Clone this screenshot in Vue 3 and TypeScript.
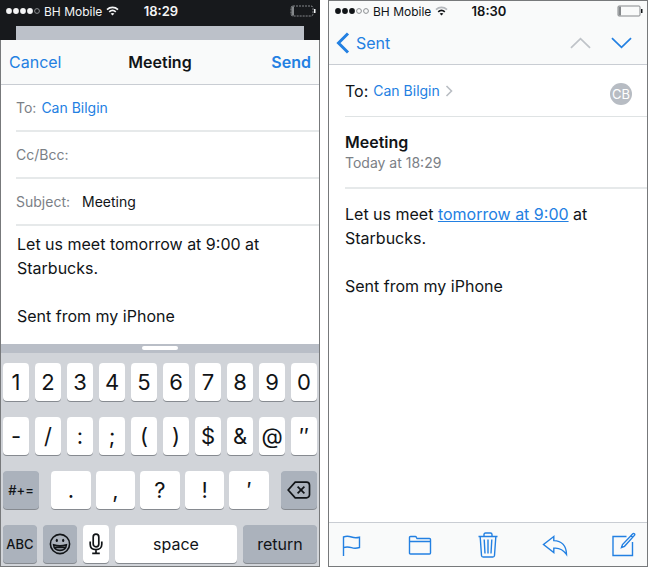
<script setup lang="ts">
import { ref } from 'vue'

const recipient = ref<string>('Can Bilgin')
const copies = ref<string>('')
const subject = ref<string>('Meeting')
const body = ref<string>('Let us meet tomorrow at 9:00 at Starbucks.\n\nSent from my iPhone')

const digits: string[] = ['1', '2', '3', '4', '5', '6', '7', '8', '9', '0']
const symbols: string[] = ['-', '/', ':', ';', '(', ')', '$', '&', '@', '″']
const punctuation: string[] = ['.', ',', '?', '!', '′']
</script>

<template>
  <main class="screens">
    <section class="phone compose">
      <header class="status dark">
        <span class="carrier">
          <svg class="dots" viewBox="0 0 34 8" aria-hidden="true">
            <circle cx="3" cy="4" r="2.9" /><circle cx="10" cy="4" r="2.9" /><circle cx="17" cy="4" r="2.9" />
            <circle cx="24" cy="4" r="2.9" /><circle class="empty" cx="31" cy="4" r="2.4" />
          </svg>
          BH Mobile
          <svg class="wifi" viewBox="0 0 13 10" aria-hidden="true">
            <path d="M1 3.6C4.2.6 8.8.6 12 3.6M3.2 5.9c1.9-1.7 4.7-1.7 6.6 0" />
            <path class="solid" d="M6.5 9.6 4.6 7.6c1.1-.9 2.7-.9 3.8 0z" />
          </svg>
        </span>
        <time class="clock">18:29</time>
        <svg class="battery" viewBox="0 0 26 12" aria-hidden="true">
          <rect x="1" y="1" width="22" height="10" rx="2" stroke-dasharray="2 1" />
          <path class="solid" d="M1.5 1.5H4v9H1.5z" /><path class="solid tip" d="M24 4h1.5v4H24z" />
        </svg>
      </header>
      <div class="behind"></div>

      <form class="sheet" @submit.prevent>
        <div class="titlebar">
          <button type="button" class="link">Cancel</button>
          <h1>Meeting</h1>
          <button type="submit" class="link strong">Send</button>
        </div>
        <div class="field">
          <label for="to">To:</label>
          <input id="to" v-model="recipient" class="address" type="text" />
        </div>
        <div class="field">
          <label for="cc">Cc/Bcc:</label>
          <input id="cc" v-model="copies" type="text" />
        </div>
        <div class="field wide">
          <label for="subject">Subject:</label>
          <input id="subject" v-model="subject" type="text" />
        </div>
        <textarea v-model="body" class="text" aria-label="Message" rows="4"></textarea>
      </form>

      <div class="handle"><span></span></div>
      <div class="keyboard">
        <div class="keys">
          <button v-for="key in digits" :key="key" type="button" class="key">{{ key }}</button>
        </div>
        <div class="keys">
          <button v-for="key in symbols" :key="key" type="button" class="key">{{ key }}</button>
        </div>
        <div class="keys spread">
          <button type="button" class="key gray small">#+=</button>
          <div class="middle">
            <button v-for="key in punctuation" :key="key" type="button" class="key">{{ key }}</button>
          </div>
          <button type="button" class="key gray small" aria-label="Delete">
            <svg class="delete" viewBox="0 0 24 18" aria-hidden="true">
              <path d="M8.2 1.2h11.3a3 3 0 0 1 3 3v9.6a3 3 0 0 1-3 3H8.2L1.2 9z" /><path d="m10.6 5.6 6.8 6.8m0-6.8-6.8 6.8" />
            </svg>
          </button>
        </div>
        <div class="keys last">
          <button type="button" class="key gray small">ABC</button>
          <button type="button" class="key gray" aria-label="Emoji">
            <svg class="emoji" viewBox="0 0 22 22" aria-hidden="true">
              <circle cx="11" cy="11" r="9.6" />
              <path d="M4.6 11.8c4.2 1.2 8.600 1.200 12.800 0-.3 3.500-2.800 5.600-6.400 5.600s-6.100-2.100-6.400-5.600zM6 14.400h10" />
              <ellipse class="solid" cx="7.800" cy="7.400" rx="1.100" ry="1.600" /><ellipse class="solid" cx="14.200" cy="7.400" rx="1.100" ry="1.600" />
            </svg>
          </button>
          <button type="button" class="key" aria-label="Dictate">
            <svg class="mic" viewBox="0 0 14 22" aria-hidden="true">
              <rect x="4.200" y="1.200" width="5.600" height="12.600" rx="2.800" />
              <path d="M1.200 8.600v2.600c0 3.400 2.400 5.400 5.800 5.400s5.800-2 5.800-5.400V8.600M7 16.600v3.600M3.200 20.400h7.600" />
            </svg>
          </button>
          <button type="button" class="key word">space</button>
          <button type="button" class="key gray word">return</button>
        </div>
      </div>
    </section>

    <section class="phone reader">
      <div class="bar">
        <header class="status">
          <span class="carrier">
            <svg class="dots" viewBox="0 0 34 8" aria-hidden="true">
              <circle cx="3" cy="4" r="2.9" /><circle cx="10" cy="4" r="2.9" /><circle cx="17" cy="4" r="2.9" />
              <circle class="empty" cx="24" cy="4" r="2.4" /><circle class="empty" cx="31" cy="4" r="2.4" />
            </svg>
            BH Mobile
            <svg class="wifi" viewBox="0 0 13 10" aria-hidden="true">
              <path class="faint" d="M1 3.6C4.2.6 8.8.6 12 3.6" /><path d="M3.2 5.9c1.9-1.7 4.7-1.7 6.6 0" />
              <path class="solid" d="M6.5 9.6 4.6 7.6c1.1-.9 2.7-.9 3.8 0z" />
            </svg>
          </span>
          <time class="clock">18:30</time>
          <svg class="battery" viewBox="0 0 26 12" aria-hidden="true">
            <rect x="1" y="1" width="22" height="10" rx="1" />
            <path class="solid" d="M1.5 1.5H4v9H1.5z" /><path class="solid tip" d="M24 4h1.5v4H24z" />
          </svg>
        </header>
        <nav class="nav">
          <a href="#" class="back">
            <svg viewBox="0 0 14 22" aria-hidden="true"><path d="M12 1.500 2.500 11l9.500 9.500" /></svg>
            Sent
          </a>
          <button type="button" class="step off" aria-label="Previous message" disabled>
            <svg viewBox="0 0 22 12" aria-hidden="true"><path d="m1 11 10-9.500L21 11" /></svg>
          </button>
          <button type="button" class="step" aria-label="Next message">
            <svg viewBox="0 0 22 12" aria-hidden="true"><path d="m1 1 10 9.500L21 1" /></svg>
          </button>
        </nav>
      </div>

      <article class="mail">
        <div class="to">
          <span>To:</span>
          <a href="#">Can Bilgin</a>
          <svg class="more" viewBox="0 0 8 12" aria-hidden="true"><path d="m1.500 1 5 5-5 5" /></svg>
          <span class="avatar">CB</span>
        </div>
        <div class="subject">
          <h2>Meeting</h2>
          <time>Today at 18:29</time>
        </div>
        <div class="text">
          <p>Let us meet <a href="#">tomorrow at 9:00</a> <span>at</span> <span>Starbucks.</span></p>
          <p>Sent from my iPhone</p>
        </div>
      </article>

      <footer class="tools">
        <button type="button" aria-label="Flag">
          <svg viewBox="0 0 24 26" aria-hidden="true">
            <path d="M3.500 24V5c3-1.200 5.500-.8 8 0s5 1 8 .2v10.300c-3 1-5.500 1-8 .2s-5-1.200-8 0" />
          </svg>
        </button>
        <button type="button" aria-label="Move to folder">
          <svg viewBox="0 0 24 26" aria-hidden="true">
            <path d="M1.500 21V5.500q0-1 1-1h4.800q.8 0 1.200 1l.5 1h12.500q1 0 1 1V21q0 1-1 1h-19q-1 0-1-1zM1.500 9.500h21" />
          </svg>
        </button>
        <button type="button" aria-label="Delete message">
          <svg viewBox="0 0 24 26" aria-hidden="true">
            <path d="M2.500 4.500h19M8 4V2.500q0-1.500 1.500-1.500h5Q16 1 16 2.500V4M4.200 5l1.300 18.500q.1 1.500 1.600 1.500h9.800q1.500 0 1.600-1.500L19.800 5M8.200 7.500 9 21.500M12 7.500v14M15.800 7.500l-.8 14" />
          </svg>
        </button>
        <button type="button" aria-label="Reply">
          <svg viewBox="2 0 24 26" aria-hidden="true">
            <path d="M11.800 4.500 1.500 12.500l10.300 8v-4.300c5-.6 9.200 1.200 12.700 6.200C24.300 13.800 19.500 8.800 11.800 8.600z" />
          </svg>
        </button>
        <button type="button" aria-label="New message">
          <svg viewBox="0 0 24 26" aria-hidden="true">
            <path d="M14.500 4.500H1v19h19.500V10M9.500 15.500l1-3L20.800 1.800q.8-.7 1.600 0t0 1.600L12.500 14.300zM19 3.500l2 2" />
          </svg>
        </button>
      </footer>
    </section>
  </main>
</template>

<style>
body {
  background: #fff;
}
</style>

<style scoped>
.screens {
  display: grid;
  grid-template-columns: 1fr 1fr;
  gap: 8px;
  min-height: 100vh;
  font-family: Inter, 'Liberation Sans', sans-serif;
  font-size: 16px;
  color: #111417;
}

.screens *,
.screens {
  box-sizing: border-box;
}

button,
input,
textarea {
  margin: 0;
  padding: 0;
  border: 0;
  background: none;
  font: inherit;
  color: inherit;
  outline: none;
}

h1,
h2,
p {
  margin: 0;
}

a,
.link {
  color: #2380e2;
  text-decoration: none;
}

svg {
  display: block;
  flex: none;
  fill: none;
  stroke: currentColor;
  overflow: visible;
}

.solid {
  fill: currentColor;
  stroke: none;
}

.phone {
  display: flex;
  flex-direction: column;
  min-width: 0;
}

.compose {
  background: #17191c;
}

.reader {
  border: 1px solid #77797b;
}

/* status bar */
.status {
  display: grid;
  grid-template-columns: 1fr auto 1fr;
  align-items: center;
  height: 20px;
  padding: 0 4px 0 6px;
  font-size: 12px;
}

.dark {
  height: 22px;
  color: #f4f5f6;
}

.carrier {
  display: flex;
  align-items: center;
  gap: 4px;
  white-space: nowrap;
}

.clock {
  font-size: 13px;
  font-weight: 600;
}

.dots {
  width: 34px;
  height: 8px;
  fill: currentColor;
  stroke: none;
}

.dots .empty {
  fill: none;
  stroke: #8b8e91;
}

.wifi {
  width: 13px;
  height: 10px;
  stroke-width: 1.7;
}

.faint {
  stroke: #b4b8bc;
}

.battery {
  justify-self: end;
  width: 26px;
  height: 12px;
  stroke: #85888b;
}

.battery .solid {
  fill: #85888b;
  stroke: none;
}

.battery .tip {
  fill: currentColor;
}

.behind {
  height: 14px;
  margin: 4px 16px 0;
  background: #bcc1c9;
}

/* compose sheet */
.sheet {
  flex: 1;
  display: flex;
  flex-direction: column;
  border: 1px solid #77797b;
  border-width: 0 1px;
  background: #fff;
}

.titlebar {
  display: grid;
  grid-template-columns: 1fr auto 1fr;
  align-items: center;
  height: 45px;
  padding: 0 8px;
  border-bottom: 1px solid #c9cdd3;
  background: #f9fafa;
}

.titlebar h1 {
  font-size: 16px;
  font-weight: 600;
}

.link {
  justify-self: start;
}

.strong {
  justify-self: end;
  font-weight: 600;
}

.field {
  display: flex;
  align-items: center;
  gap: 5px;
  height: 47px;
  margin-left: 15px;
  border-bottom: 2px solid #e6e9ea;
  font-size: 14px;
}

.wide {
  gap: 12px;
}

.field label {
  color: #7b8086;
}

.field input {
  flex: 1;
  min-width: 0;
}

.field .address {
  color: #2380e2;
}

.text {
  line-height: 24px;
}

textarea.text {
  flex: 1;
  padding: 6px 16px 0;
  resize: none;
  overflow: hidden;
}

/* keyboard */
.handle {
  display: flex;
  justify-content: center;
  height: 9px;
  padding-top: 2px;
  border: 1px solid #77797b;
  border-width: 0 1px;
  background: #b9bec7;
}

.handle span {
  width: 36px;
  height: 4px;
  border-radius: 2px;
  background: #fff;
}

.keyboard {
  display: flex;
  flex-direction: column;
  gap: 16px;
  padding: 10px 2px 3px;
  border: 1px solid #77797b;
  border-top: 0;
  background: #d1d4d9;
}

.keys {
  display: grid;
  grid-template-columns: repeat(10, 1fr);
  gap: 6px;
}

.spread {
  grid-template-columns: 36px 1fr 36px;
  gap: 12px;
}

.middle {
  display: grid;
  grid-template-columns: repeat(5, 1fr);
  gap: 5px;
}

.last {
  grid-template-columns: 34px 34px 26px 1fr 74px;
}

.key {
  display: flex;
  align-items: center;
  justify-content: center;
  height: 38px;
  border-radius: 4px;
  background: #fff;
  box-shadow: 0 1px 0 #868a90;
  font-size: 22px;
}

.gray {
  background: #abb2bc;
}

.small {
  font-size: 13px;
  font-weight: 500;
}

.word {
  font-size: 16px;
}

.delete {
  width: 24px;
  height: 18px;
  stroke-width: 1.7;
}

.emoji {
  width: 22px;
  height: 22px;
  stroke-width: 1.6;
}

.mic {
  width: 14px;
  height: 22px;
  stroke-width: 1.7;
}

/* reader */
.bar {
  border-bottom: 1px solid #c9cdd3;
  background: #f9fafa;
}

.nav {
  display: flex;
  align-items: center;
  gap: 20px;
  height: 43px;
  padding: 0 15px 0 7px;
}

.back {
  display: flex;
  align-items: center;
  gap: 6px;
  margin-right: auto;
}

.back svg {
  width: 14px;
  height: 22px;
  stroke-width: 3;
}

.step {
  color: #2380e2;
}

.step svg {
  width: 21px;
  height: 12px;
  stroke-width: 1.8;
}

.off {
  color: #bfc3c8;
}

.mail {
  flex: 1;
  padding-left: 16px;
}

.to {
  display: flex;
  align-items: center;
  gap: 5px;
  height: 52px;
  border-bottom: 1px solid #dfe3e4;
}

.to a {
  font-size: 14px;
}

.more {
  width: 8px;
  height: 12px;
  color: #b9bdc3;
  stroke-width: 1.6;
}

.avatar {
  display: flex;
  align-items: center;
  justify-content: center;
  width: 22px;
  height: 22px;
  margin: 6px 15px 0 auto;
  border-radius: 50%;
  background: #b7bcc3;
  color: #fff;
  font-size: 13px;
}

.subject {
  display: flex;
  flex-direction: column;
  justify-content: center;
  height: 72px;
  border-bottom: 2px solid #e6e9ea;
}

.subject h2 {
  font-size: 16px;
  font-weight: 600;
  line-height: 22px;
}

.subject time {
  color: #7b8086;
  font-size: 14px;
  line-height: 20px;
}

.mail .text {
  display: grid;
  gap: 24px;
  padding: 13px 16px 0 0;
}

.mail .text a {
  text-decoration: underline;
}

.tools {
  display: flex;
  align-items: center;
  justify-content: space-between;
  height: 44px;
  padding: 0 11px;
  border-top: 1px solid #c9cdd3;
  background: #f9fafa;
}

.tools button {
  color: #2380e2;
}

.tools svg {
  width: 24px;
  height: 26px;
  stroke-width: 1.4;
}
</style>
